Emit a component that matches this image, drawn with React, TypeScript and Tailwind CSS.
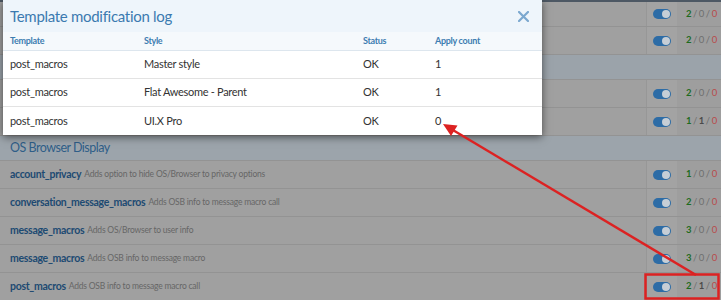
import React from "react";

type Item = { name?: string; hint?: string; a: number; b: number; c: number; h?: string };

const topRows: Item[] = [
  { a: 2, b: 0, c: 0, h: "h-[25px]" },
  { a: 2, b: 0, c: 0 },
];

const midRows: Item[] = [
  { a: 2, b: 0, c: 0 },
  { a: 1, b: 1, c: 0 },
];

const osbRows: Item[] = [
  { name: "account_privacy", hint: "Adds option to hide OS/Browser to privacy options", a: 1, b: 0, c: 0 },
  { name: "conversation_message_macros", hint: "Adds OSB info to message macro call", a: 2, b: 0, c: 0 },
  { name: "message_macros", hint: "Adds OS/Browser to user info", a: 3, b: 0, c: 0 },
  { name: "message_macros", hint: "Adds OSB info to message macro", a: 3, b: 0, c: 0 },
  { name: "post_macros", hint: "Adds OSB info to message macro call", a: 2, b: 1, c: 0 },
];

const logRows = [
  { template: "post_macros", style: "Master style", status: "OK", count: 1 },
  { template: "post_macros", style: "Flat Awesome - Parent", status: "OK", count: 1 },
  { template: "post_macros", style: "UI.X Pro", status: "OK", count: 0 },
];

function Toggle() {
  return (
    <div className="w-[18px] h-[10px] rounded-full bg-[#2d6ca6] flex items-center justify-end pr-[1px]">
      <div className="w-[8px] h-[8px] rounded-full bg-[#c6ced6]" />
    </div>
  );
}

function Row({ item }: { item: Item }) {
  return (
    <div className={`flex border-b border-[#939393] ${item.h ?? "h-[28px]"}`}>
      <div className="flex-1 min-w-0 flex items-center px-[10px] gap-[3px] whitespace-nowrap">
        {item.name && (
          <span className="text-[10.5px] font-bold tracking-[-0.3px] text-[#1d4a72]">{item.name}</span>
        )}
        {item.hint && <span className="text-[8.5px] tracking-[-0.2px] text-[#666]">{item.hint}</span>}
      </div>
      <div className="w-[31px] shrink-0 flex items-center justify-center bg-[#a3a3a3] border-l border-[#979797]">
        <Toggle />
      </div>
      <div className="w-[44px] shrink-0 flex items-center pl-[9px] text-[9.5px] text-[#6e6e6e] bg-[#9e9e9e] whitespace-nowrap">
        <span className="font-bold text-[#1e6b1e]">{item.a}</span>
        <span className="mx-[1.5px]">/</span>
        <span className={item.b > 0 ? "font-bold text-[#4a4a4a]" : ""}>{item.b}</span>
        <span className="mx-[1.5px]">/</span>
        <span className="text-[#b84b4b]">{item.c}</span>
      </div>
    </div>
  );
}

export default function App() {
  return (
    <div className="relative w-[721px] h-[300px] overflow-hidden bg-[#a0a0a0] font-['Lato',sans-serif]">
      {/* page behind the overlay */}
      <div className="h-[2px] bg-[#4d5864]" />
      {topRows.map((r, i) => (
        <Row key={i} item={r} />
      ))}
      <div className="h-[25px] bg-[#9ba3aa] border-b border-[#939393]" />
      {midRows.map((r, i) => (
        <Row key={i} item={r} />
      ))}
      <div className="h-[25px] bg-[#9ca4ab] border-b border-[#939393] flex items-center px-[10px] text-[12.5px] tracking-[-0.5px] text-[#2f5e88]">
        OS Browser Display
      </div>
      {osbRows.map((r, i) => (
        <Row key={i} item={r} />
      ))}

      {/* modal */}
      <div className="absolute left-[3px] top-0 w-[539px] bg-white shadow-[0_2px_8px_rgba(0,0,0,0.55)]">
        <div className="h-[32px] bg-[#eef5fb] flex items-center justify-between pl-[7px] pr-[13px]">
          <span className="text-[15px] tracking-[-0.3px] text-[#3b7ab0]">Template modification log</span>
          <svg width="11" height="11" viewBox="0 0 11 11">
            <path d="M1 1L10 10M10 1L1 10" stroke="#7ba8cf" strokeWidth="2.2" strokeLinecap="round" />
          </svg>
        </div>
        <div className="h-[19px] bg-[#f5f9fc] border-b border-[#dde6ee] grid grid-cols-[134px_219px_72px_1fr] items-center pl-[7px] text-[9px] tracking-[-0.3px] font-bold text-[#3d7db1]">
          <span>Template</span>
          <span>Style</span>
          <span>Status</span>
          <span>Apply count</span>
        </div>
        {logRows.map((r, i) => (
          <div
            key={i}
            className={`h-[28px] grid grid-cols-[134px_219px_72px_1fr] items-center pl-[7px] text-[11px] tracking-[-0.3px] text-[#333] ${
              i < logRows.length - 1 ? "border-b border-[#e3e3e3]" : ""
            }`}
          >
            <span>{r.template}</span>
            <span>{r.style}</span>
            <span>{r.status}</span>
            <span>{r.count}</span>
          </div>
        ))}
      </div>

      {/* annotation */}
      <svg className="absolute inset-0" width="721" height="300" viewBox="0 0 721 300">
        <rect x="645.5" y="274.5" width="73" height="24" fill="none" stroke="#dc2222" strokeWidth="2.5" />
        <line x1="452" y1="129.5" x2="696" y2="275" stroke="#dc2222" strokeWidth="2.5" />
        <polygon points="443,124 451,136 457.5,125.5" fill="#dc2222" />
      </svg>
    </div>
  );
}
